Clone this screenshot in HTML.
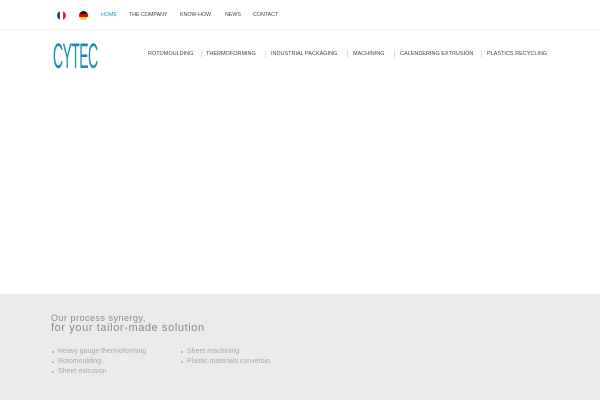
<!DOCTYPE html>
<html><head><meta charset="utf-8"><style>
*{margin:0;padding:0;box-sizing:border-box}
body{width:600px;height:400px;background:#fff;font-family:"Liberation Sans",sans-serif;position:relative;overflow:hidden}
.top{position:absolute;left:0;top:0;width:600px;height:30px;border-bottom:1px solid #eee}
.flag{position:absolute;top:11px;width:9px;height:9px;border-radius:50%;overflow:hidden;display:flex}
.flag i{flex:1}
.fr{left:57px}.fr i:nth-child(1){background:#1e3fa0}.fr i:nth-child(2){background:#fff}.fr i:nth-child(3){background:#e0202a}
.de{left:79px;flex-direction:column}.de i:nth-child(1){background:#111}.de i:nth-child(2){background:#d00}.de i:nth-child(3){background:#fc0}
.tl{position:absolute;top:12px;font-size:5.3px;color:#444;letter-spacing:0}
.logo{position:absolute;left:53px;top:36px;font-size:22px;color:#1b8db0;letter-spacing:-1px;transform:scaleY(1.6) scaleX(.64);transform-origin:left top;font-weight:normal}
.nav{position:absolute;top:51px;font-size:5.5px;color:#444;letter-spacing:0;white-space:nowrap}
.sep{position:absolute;top:50px;width:1px;height:8px;background:#ddd}
.foot{position:absolute;left:0;top:294px;width:600px;height:106px;background:#ebebeb}
.h1{position:absolute;left:51px;top:313px;font-size:9px;color:#8a8a8a;letter-spacing:.5px}
.h2{position:absolute;left:51px;top:322px;font-size:11px;color:#888;letter-spacing:.6px}
.li{position:absolute;font-size:7px;color:#aaa}
.li:before{content:"";position:absolute;left:-6px;top:3px;width:2px;height:2px;background:#aaa;border-radius:50%}
</style></head><body>
<div class="top">
<div class="flag fr"><i></i><i></i><i></i></div>
<div class="flag de"><i></i><i></i><i></i></div>
<div class="tl" style="left:101px;color:#2a9ac0">HOME</div>
<div class="tl" style="left:129px">THE COMPANY</div>
<div class="tl" style="left:180px">KNOW-HOW</div>
<div class="tl" style="left:225px">NEWS</div>
<div class="tl" style="left:253px">CONTACT</div>
</div>
<div class="logo">CYTEC</div>
<div class="nav" style="left:148px">ROTOMOULDING</div>
<div class="sep" style="left:201px"></div>
<div class="nav" style="left:206px">THERMOFORMING</div>
<div class="sep" style="left:265px"></div>
<div class="nav" style="left:271px">INDUSTRIAL PACKAGING</div>
<div class="sep" style="left:347px"></div>
<div class="nav" style="left:353px">MACHINING</div>
<div class="sep" style="left:394px"></div>
<div class="nav" style="left:400px">CALENDERING EXTRUSION</div>
<div class="sep" style="left:481px"></div>
<div class="nav" style="left:487px">PLASTICS RECYCLING</div>
<div class="foot"></div>
<div class="h1">Our process synergy,</div>
<div class="h2">for your tailor-made solution</div>
<div class="li" style="left:58px;top:348px">Heavy gauge thermoforming</div>
<div class="li" style="left:58px;top:358px">Rotomoulding</div>
<div class="li" style="left:58px;top:368px">Sheet extrusion</div>
<div class="li" style="left:187px;top:348px">Sheet machining</div>
<div class="li" style="left:187px;top:358px">Plastic materials conversio</div>
</body></html>
